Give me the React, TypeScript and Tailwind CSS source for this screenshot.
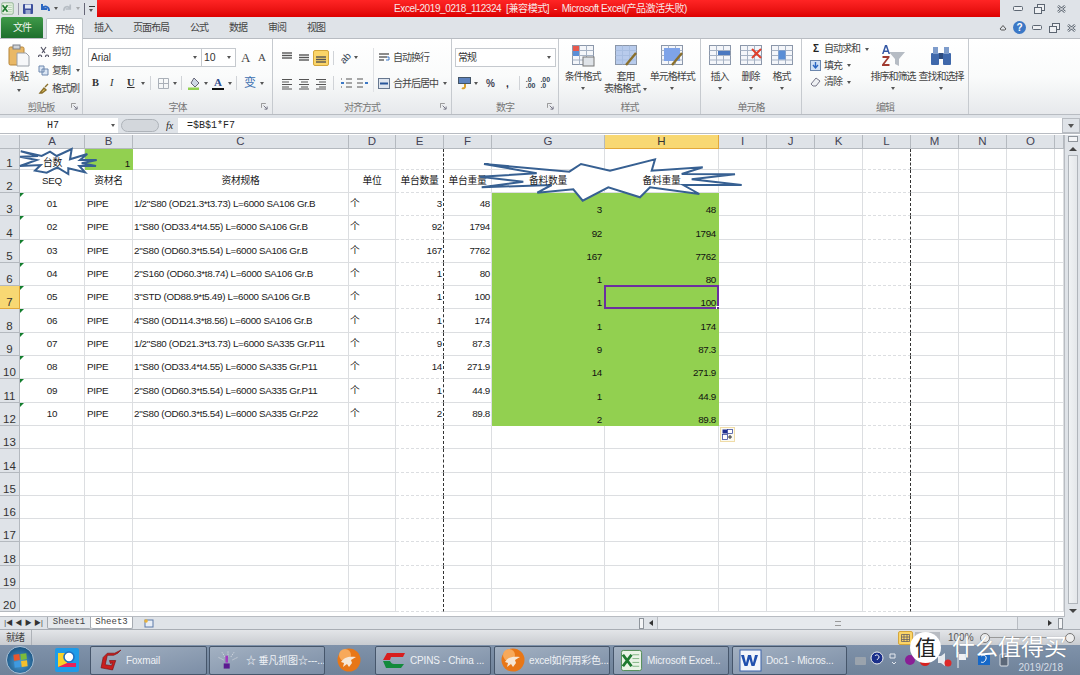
import type { ReactNode } from 'react';

const colWidths = [65, 48, 216, 47, 48, 48, 113, 114, 48, 48, 48, 48, 48, 48, 48, 9];
const colNames = ['A', 'B', 'C', 'D', 'E', 'F', 'G', 'H', 'I', 'J', 'K', 'L', 'M', 'N', 'O', ''];

const rows = [
    ['01', '1/2"S80 (OD21.3*t3.73) L=6000 SA106 Gr.B', '3', '48'],
    ['02', '1"S80 (OD33.4*t4.55) L=6000 SA106 Gr.B', '92', '1794'],
    ['03', '2"S80 (OD60.3*t5.54) L=6000 SA106 Gr.B', '167', '7762'],
    ['04', '2"S160 (OD60.3*t8.74) L=6000 SA106 Gr.B', '1', '80'],
    ['05', '3"STD (OD88.9*t5.49) L=6000 SA106 Gr.B', '1', '100'],
    ['06', '4"S80 (OD114.3*t8.56) L=6000 SA106 Gr.B', '1', '174'],
    ['07', '1/2"S80 (OD21.3*t3.73) L=6000 SA335 Gr.P11', '9', '87.3'],
    ['08', '1"S80 (OD33.4*t4.55) L=6000 SA335 Gr.P11', '14', '271.9'],
    ['09', '2"S80 (OD60.3*t5.54) L=6000 SA335 Gr.P11', '1', '44.9'],
    ['10', '2"S80 (OD60.3*t5.54) L=6000 SA335 Gr.P22', '2', '89.8'],
];

const tabs = ['插入', '页面布局', '公式', '数据', '审阅', '视图'];

function Caret({ className = '' }: { className?: string }) {
    return <span className={`inline-block shrink-0 w-0 h-0 border-x-[2.5px] border-x-transparent border-t-[3px] border-t-[#555] ${className}`} />;
}

function RowHeader({ n, h, active }: { n: number; h: string; active?: boolean }) {
    return (
        <div className={`${h} flex items-end justify-center text-[11.5px] leading-[11px] border-b border-r ${active ? 'bg-[#f8d873] border-[#e2a83a] text-[#333]' : 'bg-[#dfe3e8] border-[#b4b9bf] text-[#333]'}`}>
            {n}
        </div>
    );
}

function Cell({ col, children, className = '', green }: { col: number; children?: ReactNode; className?: string; green?: boolean }) {
    const dashed = col === 4 || col === 11;
    const tone = green ? 'bg-[#92d050] border-[#92d050] leading-[10px] text-[#111]' : 'border-[#dcdee1] leading-[12px] text-[#1a1a1a]';
    return (
        <div
            className={`relative flex min-w-0 whitespace-nowrap border-b text-[9.8px] tracking-[-0.3px] ${tone} ${dashed ? 'border-r border-r-[#333] border-dashed' : 'border-r'} ${className}`}
        >
            {children}
        </div>
    );
}

function SheetRow({ n, h, cells, active }: { n: number; h: string; cells?: Record<number, ReactNode>; active?: boolean }) {
    return (
        <>
            <RowHeader n={n} h={h} active={active} />
            {colWidths.map((_, i) => (
                <div key={i} className="contents">
                    {cells?.[i] ?? <Cell col={i} />}
                </div>
            ))}
        </>
    );
}

function Group({ label, className, children, launcher }: { label: string; className: string; children?: ReactNode; launcher?: boolean }) {
    return (
        <div className={`relative flex flex-col border-r border-[#c6cacf] ${className}`}>
            <div className="flex-1 min-h-0">{children}</div>
            <div className="h-[14px] flex items-center justify-center text-[10px] text-[#777]">{label}</div>
            {launcher && (
                <svg className="absolute right-[4px] bottom-[4px]" width="7" height="7" viewBox="0 0 8 8">
                    <path d="M.5.5h5M.5.5v5" stroke="#888" fill="none" />
                    <path d="M3 3l3.5 3.5M4 7h3V4" stroke="#667" fill="none" />
                </svg>
            )}
        </div>
    );
}

function LargeButton({ label, second, icon, className = '' }: { label: string; second?: string; icon: ReactNode; className?: string }) {
    return (
        <div className={`flex flex-col items-center text-[10px] leading-[12px] text-[#444] ${className}`}>
            <div className="h-[24px] mt-[5px] mb-[3px] flex items-center">{icon}</div>
            <span className="whitespace-nowrap">{label}</span>
            {second ? (
                <span className="whitespace-nowrap flex items-center gap-[3px]">
                    {second}
                    <Caret />
                </span>
            ) : (
                <Caret className="mt-[4px]" />
            )}
        </div>
    );
}

function Sep({ className = '' }: { className?: string }) {
    return <span className={`shrink-0 w-px h-[14px] bg-[#d0d3d7] ${className}`} />;
}

function AlignIcon({ kind, className = '' }: { kind: 'l' | 'c' | 'r' | 't' | 'm' | 'b'; className?: string }) {
    if (kind === 't' || kind === 'm' || kind === 'b') {
        const ys = kind === 't' ? [2, 4.5, 7] : kind === 'm' ? [4, 6.5, 9] : [6, 8.5, 11];
        return (
            <svg className={`shrink-0 ${className}`} width="12" height="13" viewBox="0 0 12 13">
                {ys.map((y) => (
                    <path key={y} d={`M1 ${y}h10`} stroke="#555" strokeWidth="1.4" />
                ))}
            </svg>
        );
    }
    const short = kind === 'l' ? 'M1 5h7M1 10h7' : kind === 'c' ? 'M3 5h7M3 10h7' : 'M4 5h7M4 10h7';
    return (
        <svg className={`shrink-0 ${className}`} width="12" height="13" viewBox="0 0 12 13">
            <path d="M1 2.5h10M1 7.5h10M1 12h10" stroke="#555" strokeWidth="1.2" />
            <path d={short} stroke="#555" strokeWidth="1.2" />
        </svg>
    );
}

function GridIcon({ children }: { children?: ReactNode }) {
    return (
        <svg width="24" height="24" viewBox="0 0 24 24">
            <rect x="1.5" y="1.5" width="21" height="19" fill="#f4f6fa" stroke="#8b97aa" />
            <path d="M1.5 6.5h21M1.5 11.5h21M1.5 16h21M8.5 1.5v19M15.5 1.5v19" stroke="#a6b2c4" fill="none" />
            {children}
        </svg>
    );
}

function TaskButton({ label, icon, className }: { label: string; icon: ReactNode; className: string }) {
    return (
        <div className={`h-[29px] flex items-center gap-[4px] pl-[6px] rounded-[2px] border border-[#46566b] bg-linear-to-br from-[#a3b1c2] to-[#7c8ea6] text-[10px] tracking-[-0.15px] text-[#eef1f5] whitespace-nowrap overflow-hidden ${className}`}>
            <span className="shrink-0 flex">{icon}</span>
            <span>{label}</span>
        </div>
    );
}

function WindowButtons() {
    return (
        <>
            <svg width="11" height="6" viewBox="0 0 11 6">
                <rect x=".5" y=".5" width="9" height="4" rx="1" fill="#eef0f3" stroke="#5d6672" />
            </svg>
            <svg width="11" height="10" viewBox="0 0 11 10">
                <rect x="3.5" y=".5" width="7" height="6" fill="#eef0f3" stroke="#5d6672" />
                <rect x=".5" y="3.5" width="7" height="6" fill="#eef0f3" stroke="#5d6672" />
            </svg>
            <svg width="11" height="10" viewBox="0 0 11 10">
                <path d="M2 2l7 6M9 2l-7 6" stroke="#5d6672" strokeWidth="2.4" />
                <path d="M2 2l7 6M9 2l-7 6" stroke="#eef0f3" strokeWidth="1" />
            </svg>
        </>
    );
}

function ExcelIcon({ size, className = '' }: { size: number; className?: string }) {
    return (
        <svg className={`shrink-0 ${className}`} width={size} height={size} viewBox="0 0 24 24">
            <rect x="1.5" y="1.5" width="21" height="21" rx="2" fill="#eaf3e6" stroke="#4d8a50" />
            <path d="M13 6h7M13 10h7M13 14h7M13 18h7" stroke="#7fb482" />
            <path d="M3 6l9 12M12 6l-9 12" stroke="#1f7a30" strokeWidth="3" />
        </svg>
    );
}

function FirebirdIcon() {
    return (
        <svg width="24" height="24" viewBox="0 0 24 24">
            <circle cx="12" cy="12" r="11.5" fill="#e87717" />
            <circle cx="8" cy="7" r="6" fill="#f7a95a" />
            <path d="M4 14c3-5 8-6 15-5l-5 3 1 3-3 4-2-3-4 3 1-4z" fill="#f6e7d6" />
        </svg>
    );
}

function App() {
    const greenCorner = <span className="absolute left-0 top-0 w-0 h-0 border-r-[4px] border-r-transparent border-t-[4px] border-t-[#127d2c]" />;

    return (
        <div className="w-[1080px] h-[675px] overflow-hidden flex flex-col relative bg-white [font-family:'Liberation_Sans','Noto_Sans_CJK_SC',sans-serif]">
            {/* title bar */}
            <div className="h-[17px] flex bg-[#dfe3e8]">
                <div className="w-[97px] shrink-0 flex items-center pl-px">
                    <ExcelIcon size={13} />
                    <span className="ml-[4px] w-px h-[12px] bg-[#99a]" />
                    <svg className="ml-[3px] shrink-0" width="12" height="12" viewBox="0 0 12 12">
                        <rect x="1" y="1" width="10" height="10" rx="1" fill="#3d4f9c" />
                        <rect x="3" y="1.5" width="6" height="4" fill="#dfe6f3" />
                        <rect x="3.5" y="7" width="5" height="4" fill="#9aa8cf" />
                    </svg>
                    <svg className="ml-[5px] shrink-0" width="12" height="11" viewBox="0 0 12 11" fill="none">
                        <path d="M3 1v5h5" stroke="#2a66c2" strokeWidth="2" />
                        <path d="M3 6c2-4 7-3 7 2" stroke="#2a66c2" strokeWidth="2" />
                    </svg>
                    <Caret className="ml-[3px]" />
                    <svg className="ml-[4px] shrink-0" width="11" height="11" viewBox="0 0 12 11" fill="none">
                        <path d="M9 1v5H4M9 6C7 2 2 3 2 8" stroke="#b7bdc4" strokeWidth="1.8" />
                    </svg>
                    <Caret className="ml-[3px] opacity-40" />
                    <span className="ml-[4px] w-px h-[12px] bg-[#667]" />
                    <span className="ml-[4px] w-[6px] h-[6px] border-t border-[#333] flex items-end">
                        <Caret />
                    </span>
                </div>
                <div className="w-[903px] shrink-0 flex items-center justify-center bg-linear-to-b from-[#ff2424] to-[#dd0000] text-[10px] tracking-[-0.4px] text-[#f8e8e8] whitespace-pre pr-[16px]">
                    Excel-2019_0218_112324{'  '}[兼容模式]{'  '}-{'  '}Microsoft Excel(产品激活失败)
                </div>
                <div className="flex-1 flex items-center justify-around px-[8px] pt-px">
                    <WindowButtons />
                </div>
            </div>

            {/* ribbon tabs */}
            <div className="h-[21px] flex items-end bg-[#dfe3e8] text-[10px] tracking-[-1px] text-[#444] relative">
                <div className="w-[42px] ml-px h-[21px] flex items-center justify-center rounded-t-[2px] bg-linear-to-b from-[#3f9a49] to-[#1d6f2d] text-[#eef5ee]">文件</div>
                <div className="w-[37px] ml-[3px] h-[21px] -mb-px flex items-center justify-center rounded-t-[2px] bg-white border-x border-t border-[#c1c6cc] z-10">开始</div>
                <div className="flex h-[21px] items-center gap-[21px] ml-[11px]">
                    {tabs.map((t) => (
                        <span key={t}>{t}</span>
                    ))}
                </div>
                <div className="ml-auto flex items-center gap-[6px] h-[21px] pr-[3px] tracking-normal">
                    <svg width="8" height="7" viewBox="0 0 8 7" fill="none">
                        <path d="M1 5l3-3.5L7 5l-1.5 1h-3z" stroke="#555" />
                    </svg>
                    <span className="w-[13px] h-[13px] rounded-full bg-[#3c78c6] text-white text-[10px] font-bold flex items-center justify-center">?</span>
                    <WindowButtons />
                </div>
            </div>

            {/* ribbon */}
            <div className="h-[77px] flex border-y border-[#b8bcc2] bg-linear-to-b from-white via-[#fafbfb] to-[#e7e9ec] tracking-[-1px] whitespace-nowrap">
                <Group label="剪贴板" launcher className="w-[83px]">
                    <div className="flex h-full">
                        <div className="w-[38px] flex flex-col items-center text-[10px] text-[#444]">
                            <svg className="mt-[5px]" width="22" height="23" viewBox="0 0 22 23">
                                <rect x="1" y="3" width="15" height="18" rx="1.5" fill="#e9b866" stroke="#b5853a" />
                                <rect x="5" y="1" width="7" height="4" fill="#cfd3d8" stroke="#7c8087" />
                                <path d="M9 9h9l3 3v10H9z" fill="#f6f7f9" stroke="#9aa0a8" />
                            </svg>
                            <span className="mt-[4px] leading-[12px]">粘贴</span>
                            <Caret className="mt-[6px]" />
                        </div>
                        <div className="flex flex-col gap-[5px] pt-[6px] text-[10px] leading-[13.5px] text-[#444]">
                            {['剪切', '复制', '格式刷'].map((t, i) => (
                                <div key={t} className="flex items-center gap-[3px]">
                                    <svg width="11" height="11" viewBox="0 0 11 11" fill="none">
                                        {i === 0 && <path d="M3 1l4 6M8 1L4 7M2 9a1.5 1.5 0 1 0 .1 0M9 9a1.5 1.5 0 1 0 .1 0" stroke="#556" strokeWidth="1.2" />}
                                        {i === 1 && <path d="M1 1h5v6H1zM4 4h6v6H4z" fill="#dbe6f4" stroke="#6c87ad" />}
                                        {i === 2 && <path d="M2 10l4-5 2 2-4 3zM7 4l3-3" fill="#e8c860" stroke="#8a6f2b" strokeWidth="1.4" />}
                                    </svg>
                                    <span>{t}</span>
                                    {i === 1 && <Caret className="ml-[3px]" />}
                                </div>
                            ))}
                        </div>
                    </div>
                </Group>

                <Group label="字体" launcher className="w-[190px]">
                    <div className="pt-[9px] pl-[5px]">
                        <div className="flex items-center tracking-normal">
                            <div className="w-[114px] h-[19px] flex items-center justify-between px-[2px] pr-[4px] border border-[#c5c9ce] bg-white text-[10px] text-[#333]">
                                Arial
                                <Caret />
                            </div>
                            <div className="w-[35px] h-[19px] -ml-px flex items-center justify-between px-[2px] pr-[4px] border border-[#c5c9ce] bg-white text-[10.5px] text-[#333]">
                                10
                                <Caret />
                            </div>
                            <span className="ml-[5px] w-[15px] text-[13px] leading-none text-[#444] [font-family:'Liberation_Serif',serif]">A</span>
                            <span className="ml-[2px] w-[12px] text-[11px] leading-none text-[#444] [font-family:'Liberation_Serif',serif]">A</span>
                        </div>
                        <div className="flex items-center mt-[7px] h-[18px] text-[#333] tracking-normal">
                            <span className="ml-[4px] w-[8px] text-[10.5px] font-bold [font-family:'Liberation_Serif',serif]">B</span>
                            <span className="ml-[10px] w-[8px] text-[10.5px] italic [font-family:'Liberation_Serif',serif]">I</span>
                            <span className="ml-[9px] w-[8px] text-[10.5px] underline font-bold [font-family:'Liberation_Serif',serif]">U</span>
                            <Caret className="ml-[6px]" />
                            <Sep className="ml-[5px]" />
                            <svg className="ml-[7px]" width="11" height="11" viewBox="0 0 11 11" fill="none">
                                <path d="M.5.5h10v10H.5zM5.5.5v10M.5 5.5h10" stroke="#aab0b8" />
                            </svg>
                            <Caret className="ml-[4px]" />
                            <Sep className="ml-[4px]" />
                            <svg className="ml-[6px]" width="13" height="13" viewBox="0 0 13 13">
                                <path d="M6 1l5 5-4 4-4-4z" fill="#cfd8e6" stroke="#667" />
                                <rect x="0" y="10.500" width="11" height="2.500" fill="#92d050" />
                            </svg>
                            <Caret className="ml-[3px]" />
                            <span className="ml-[4px] w-[12px] h-[13px] text-center text-[11px] leading-[11px] font-bold text-[#2c4c8c] [font-family:'Liberation_Serif',serif] border-b-[2.5px] border-[#111]">A</span>
                            <Caret className="ml-[4px]" />
                            <Sep className="ml-[4px]" />
                            <span className="ml-[7px] w-[12px] text-[12px] leading-none text-[#3c6fb0]">变</span>
                            <Caret className="ml-[4px]" />
                        </div>
                    </div>
                </Group>

                <Group label="对齐方式" launcher className="w-[179px]">
                    <div className="flex pt-[9px] pl-[8px]">
                        <div className="w-[92px]">
                            <div className="flex items-center h-[19px]">
                                <AlignIcon kind="t" />
                                <AlignIcon kind="m" className="ml-[5px]" />
                                <span className="shrink-0 w-[16px] h-[16px] ml-[3px] flex items-center justify-center rounded-[2px] bg-[#fbd568] border border-[#d4a63c]">
                                    <AlignIcon kind="b" />
                                </span>
                                <Sep className="ml-[4px]" />
                                <span className="ml-[6px] w-[12px] text-[10px] tracking-normal leading-none text-[#345] -rotate-45">ab</span>
                                <Caret className="ml-[2px]" />
                            </div>
                            <div className="flex items-center h-[18px] mt-[7px]">
                                <AlignIcon kind="l" />
                                <AlignIcon kind="c" className="ml-[5px]" />
                                <AlignIcon kind="r" className="ml-[5px]" />
                                <Sep className="ml-[6px]" />
                                <svg className="ml-[6px] shrink-0" width="12" height="12" viewBox="0 0 12 12" fill="none">
                                    <path d="M1 2h1M6 2h6M6 6h6M6 10h6M1 10h1" stroke="#555" />
                                    <path d="M1 6h3" stroke="#3c78c6" strokeWidth="2" />
                                </svg>
                                <svg className="ml-[4px] shrink-0" width="12" height="12" viewBox="0 0 12 12" fill="none">
                                    <path d="M1 2h6M1 6h6M1 10h6" stroke="#555" />
                                    <path d="M9 6h3" stroke="#3c78c6" strokeWidth="2" />
                                </svg>
                            </div>
                        </div>
                        <div className="text-[10px] text-[#444] border-l border-[#dfe1e4] pl-[4px]">
                            <div className="flex items-center h-[19px] gap-[3px]">
                                <svg width="12" height="11" viewBox="0 0 12 11" fill="none">
                                    <path d="M1 2h10M1 5h8M1 8h5" stroke="#666" strokeWidth="1.4" />
                                    <path d="M9 5h2v3H8" stroke="#3c78c6" />
                                </svg>
                                自动换行
                            </div>
                            <div className="flex items-center h-[18px] gap-[3px] mt-[7px]">
                                <svg width="12" height="11" viewBox="0 0 12 11">
                                    <rect x=".5" y=".5" width="11" height="10" fill="#dfe6f0" stroke="#66778f" />
                                    <path d="M2 5.500h8" stroke="#28569a" strokeWidth="2" />
                                </svg>
                                合并后居中
                                <Caret className="ml-[2px]" />
                            </div>
                        </div>
                    </div>
                </Group>

                <Group label="数字" launcher className="w-[107px]">
                    <div className="pt-[9px] pl-[3px]">
                        <div className="w-[101px] h-[19px] flex items-center justify-between px-[2px] pr-[4px] border border-[#c5c9ce] bg-white text-[10px] text-[#333]">
                            常规
                            <Caret />
                        </div>
                        <div className="flex items-center h-[18px] mt-[7px] pl-[3px] text-[10px] text-[#444] tracking-normal">
                            <svg width="13" height="13" viewBox="0 0 13 13">
                                <rect x=".5" y=".5" width="12" height="6" fill="#5c82bd" stroke="#456" />
                                <path d="M7 7v3a2 2 0 0 1-3 1" fill="none" stroke="#d8a02c" strokeWidth="2" />
                            </svg>
                            <Caret className="ml-[3px]" />
                            <span className="ml-[8px] font-bold text-[#445]">%</span>
                            <span className="ml-[11px] font-bold text-[#223]">,</span>
                            <Sep className="ml-[10px]" />
                            <span className="ml-[6px] text-[7px] leading-[6px] font-bold text-[#345]">
                                .0
                                <br />
                                .00
                            </span>
                            <span className="ml-[5px] text-[7px] leading-[6px] font-bold text-[#345]">
                                .00
                                <br />
                                .0
                            </span>
                        </div>
                    </div>
                </Group>

                <Group label="样式" className="w-[142px]">
                    <div className="flex">
                        <LargeButton
                            className="w-[48px]"
                            label="条件格式"
                            icon={
                                <GridIcon>
                                    <rect x="2" y="2" width="6" height="5" fill="#e8584c" />
                                    <rect x="2" y="7" width="6" height="5" fill="#5a8ed6" />
                                    <rect x="12" y="13" width="11" height="9" fill="#dfe3e8" stroke="#777" />
                                </GridIcon>
                            }
                        />
                        <LargeButton
                            className="w-[38px]"
                            label="套用"
                            second="表格格式"
                            icon={
                                <GridIcon>
                                    <rect x="2" y="2" width="20" height="18" fill="#a9c0e8" opacity=".8" />
                                    <path d="M12 21l10-12" stroke="#8a6f2b" strokeWidth="2.4" />
                                </GridIcon>
                            }
                        />
                        <LargeButton
                            className="w-[56px]"
                            label="单元格样式"
                            icon={
                                <GridIcon>
                                    <rect x="4" y="4" width="16" height="13" fill="#7ea3e8" />
                                    <path d="M12 21l10-12" stroke="#8a6f2b" strokeWidth="2.4" />
                                </GridIcon>
                            }
                        />
                    </div>
                </Group>

                <Group label="单元格" className="w-[101px]">
                    <div className="flex pl-[3px]">
                        <LargeButton
                            className="w-[31px]"
                            label="插入"
                            icon={
                                <GridIcon>
                                    <path d="M10 9h12" stroke="#4a78c0" strokeWidth="4" />
                                </GridIcon>
                            }
                        />
                        <LargeButton
                            className="w-[31px]"
                            label="删除"
                            icon={
                                <GridIcon>
                                    <path d="M13 5l9 9M22 5l-9 9" stroke="#e0402c" strokeWidth="2" />
                                </GridIcon>
                            }
                        />
                        <LargeButton
                            className="w-[31px]"
                            label="格式"
                            icon={
                                <GridIcon>
                                    <rect x="8.500" y="6.500" width="7" height="9" fill="#5a8ed6" />
                                </GridIcon>
                            }
                        />
                    </div>
                </Group>

                <Group label="编辑" className="w-[167px]">
                    <div className="flex">
                        <div className="w-[68px] pl-[8px] pt-[2px] text-[10px] leading-[16.5px] text-[#444]">
                            <div className="flex items-center gap-[3px]">
                                <span className="w-[11px] text-center font-bold text-[#222]">Σ</span>自动求和
                                <Caret className="ml-[2px]" />
                            </div>
                            <div className="flex items-center gap-[3px]">
                                <svg width="11" height="11" viewBox="0 0 11 11">
                                    <rect x=".5" y=".5" width="10" height="10" fill="#cfe0f5" stroke="#6c87ad" />
                                    <path d="M5.500 2v5M3 5l2.500 3L8 5" fill="none" stroke="#2a66c2" strokeWidth="1.4" />
                                </svg>
                                填充
                                <Caret className="ml-[2px]" />
                            </div>
                            <div className="flex items-center gap-[3px]">
                                <svg width="11" height="10" viewBox="0 0 11 10">
                                    <path d="M1 7l5-6 4 3-4 5H3z" fill="#eef0f3" stroke="#778" />
                                </svg>
                                清除
                                <Caret className="ml-[2px]" />
                            </div>
                        </div>
                        <LargeButton
                            className="w-[46px]"
                            label="排序和筛选"
                            icon={
                                <svg width="24" height="24" viewBox="0 0 24 24">
                                    <path d="M8 8h16l-6 7v7l-4-2v-5z" fill="#b6bcc4" />
                                    <path d="M4 1L1 10h1.500l.7-2h3.600l.7 2H9L6 1zM3.700 6.500L5 3l1.300 3.500z" fill="#3558a5" />
                                    <path d="M1.500 12h7v1.500L3.500 20h5v2h-7.500v-1.500l5-6.500h-4.500z" fill="#a03a30" />
                                </svg>
                            }
                        />
                        <LargeButton
                            className="w-[46px] ml-[2px]"
                            label="查找和选择"
                            icon={
                                <svg width="22" height="22" viewBox="0 0 22 22">
                                    <rect x="1" y="8" width="8" height="12" rx="1" fill="#3f68ab" />
                                    <rect x="13" y="8" width="8" height="12" rx="1" fill="#3f68ab" />
                                    <rect x="3" y="2" width="5" height="7" fill="#7e9ccb" />
                                    <rect x="14" y="2" width="5" height="7" fill="#7e9ccb" />
                                    <rect x="9" y="8" width="4" height="6" fill="#2e4c7f" />
                                </svg>
                            }
                        />
                    </div>
                </Group>
            </div>

            {/* formula bar */}
            <div className="h-[19px] pt-[3px] flex items-stretch bg-[#dfe3e8] border-b border-[#b8bcc2] [font-family:'Liberation_Mono',monospace] text-[10px] text-[#222]">
                <div className="w-[118px] flex items-center justify-between bg-white pl-[47px] pr-[3px]">
                    H7
                    <Caret />
                </div>
                <div className="w-[60px] flex items-center">
                    <span className="ml-[3px] w-[38px] h-[13px] rounded-full border border-[#aeb3b9] bg-[#d3d7dc]" />
                    <span className="ml-[7px] text-[10px] italic [font-family:'Liberation_Serif',serif]">fx</span>
                </div>
                <div className="flex-1 flex items-center bg-white pl-[9px]">=$B$1*F7</div>
                <div className="w-[18px] flex items-center justify-center border border-[#b8bcc2]">
                    <Caret className="border-t-[4px] border-x-[3px]" />
                </div>
            </div>

            {/* sheet */}
            <div className="flex h-[482px] relative mt-px">
                <div className="grid w-[1064px] shrink-0 h-fit grid-cols-[20px_65px_48px_216px_47px_48px_48px_113px_114px_48px_48px_48px_48px_48px_48px_48px_9px]">
                    <div className="h-[14px] bg-[#dfe3e8] border-r border-b border-[#b4b9bf]" />
                    {colNames.map((c, i) => (
                        <div
                            key={i}
                            className={`h-[14px] flex items-center justify-center text-[11.5px] border-r border-b ${c === 'H' ? 'bg-[#f8d873] border-[#e2a83a] text-[#333]' : 'bg-[#dfe3e8] border-[#b4b9bf] text-[#445]'}`}
                        >
                            {c}
                        </div>
                    ))}

                    <SheetRow
                        n={1}
                        h="h-[21px]"
                        cells={{
                            0: (
                                <Cell col={0} className="items-end justify-center">
                                    <span className="relative z-10 ml-[1px]">台数</span>
                                </Cell>
                            ),
                            1: (
                                <Cell col={1} green className="items-end justify-end pr-[2px]">
                                    1
                                </Cell>
                            ),
                        }}
                    />
                    <SheetRow
                        n={2}
                        h="h-[23px]"
                        cells={{
                            0: <Cell col={0} className="items-center justify-center">SEQ</Cell>,
                            1: <Cell col={1} className="items-center justify-center">资材名</Cell>,
                            2: <Cell col={2} className="items-center justify-center">资材规格</Cell>,
                            3: <Cell col={3} className="items-center justify-center">单位</Cell>,
                            4: <Cell col={4} className="items-center justify-center">单台数量</Cell>,
                            5: <Cell col={5} className="items-center justify-center">单台重量</Cell>,
                            6: (
                                <Cell col={6} className="items-center justify-center">
                                    <span className="relative z-10">备料数量</span>
                                </Cell>
                            ),
                            7: (
                                <Cell col={7} className="items-center justify-center">
                                    <span className="relative z-10">备料重量</span>
                                </Cell>
                            ),
                        }}
                    />
                    {rows.map((r, i) => {
                        const n = i + 3;
                        const selected = n === 7;
                        return (
                            <SheetRow
                                key={n}
                                n={n}
                                h="h-[23.3px]"
                                active={selected}
                                cells={{
                                    0: (
                                        <Cell col={0} className="items-center justify-center">
                                            {greenCorner}
                                            {r[0]}
                                        </Cell>
                                    ),
                                    1: <Cell col={1} className="items-center pl-[2px]">PIPE</Cell>,
                                    2: <Cell col={2} className="items-center pl-[1px]">{r[1]}</Cell>,
                                    3: <Cell col={3} className="items-center pl-[1px]">个</Cell>,
                                    4: <Cell col={4} className="items-center justify-end pr-[1px]">{r[2]}</Cell>,
                                    5: <Cell col={5} className="items-center justify-end pr-[1px]">{r[3]}</Cell>,
                                    6: (
                                        <Cell col={6} green className="items-end justify-end pr-[2px]">
                                            {r[2]}
                                        </Cell>
                                    ),
                                    7: (
                                        <Cell col={7} green className="items-end justify-end pr-[2px]">
                                            {r[3]}
                                            {selected && (
                                                <span className="absolute -left-px -top-px w-[115px] h-[24.3px] border-2 border-[#6b2fa0]">
                                                    <span className="absolute -right-[3px] -bottom-[3px] w-[4px] h-[4px] bg-[#5a2a90] border border-white" />
                                                </span>
                                            )}
                                        </Cell>
                                    ),
                                }}
                            />
                        );
                    })}
                    {Array.from({ length: 8 }, (_, i) => (
                        <SheetRow
                            key={i}
                            n={i + 13}
                            h="h-[23.3px]"
                            cells={
                                i === 0
                                    ? {
                                          8: (
                                              <Cell col={8}>
                                                  <span className="absolute left-[1px] top-[1px] w-[15px] h-[15px] flex items-center justify-center border border-[#f0dca8] bg-[#fbfaf2]">
                                                      <svg width="11" height="11" viewBox="0 0 11 11">
                                                          <rect x=".5" y=".5" width="5" height="4" fill="#1f2f8f" />
                                                          <rect x="5.500" y=".5" width="5" height="4" fill="#fff" stroke="#1f2f8f" strokeWidth=".7" />
                                                          <rect x=".5" y="5.500" width="5" height="5" fill="#fff" stroke="#1f2f8f" strokeWidth=".7" />
                                                          <path d="M8 6v4M6 8h4" stroke="#333" />
                                                      </svg>
                                                  </span>
                                              </Cell>
                                          ),
                                      }
                                    : undefined
                            }
                        />
                    ))}
                </div>

                {/* shapes drawn on top of the sheet */}
                <svg className="absolute left-0 top-0 z-[5] pointer-events-none" width="1062" height="100" viewBox="0 135 1062 100">
                    <path
                        d="M20.700 151.300 L41.700 156 L50 151.700 L56.700 156 L71.700 149 L70 159.300 L87.300 154 L80 160 L96.700 160 L81.700 163.300 L96 166 L79.300 166 L85 172.300 L68.300 168.300 L68.300 174 L57.300 167.300 L46.700 172.700 L35 170.700 L40.700 165 L20 166 L36.700 160 L20 156.700 L38 156 Z"
                        fill="#fff"
                        stroke="#376092"
                        strokeWidth="2"
                    />
                    <path
                        d="M484 164 L569.300 171.700 L581 164 L610 170.700 L655 159.300 L651.700 170.700 L702.700 167.300 L681.700 174 L735 174.300 L691.700 179.300 L741.700 185 L683.300 185 L699.300 194 L650 187.300 L640 197.300 L608.300 187.300 L582.700 200.700 L573.300 189.300 L537.300 192.700 L551.700 185 L481.700 187.300 L523.300 181.700 L480 176.700 L536.700 173.300 Z"
                        fill="#fff"
                        stroke="#376092"
                        strokeWidth="2"
                    />
                </svg>

                {/* vertical scrollbar */}
                <div className="flex-1 flex flex-col bg-[#dfe3e8] border-l border-[#b8bcc2] items-center">
                    <div className="w-[10px] h-[6px] mt-px border border-[#8f959c] bg-[#f4f5f7]" />
                    <div className="h-[13px] flex items-center">
                        <span className="w-0 h-0 border-x-[4px] border-x-transparent border-b-[4px] border-b-[#444]" />
                    </div>
                    <div className="w-[10px] flex-1 border border-[#b0b5bb] bg-linear-to-r from-[#f0f2f4] to-[#e4e7ea]" />
                    <div className="h-[13px] flex items-center">
                        <span className="w-0 h-0 border-x-[4px] border-x-transparent border-t-[4px] border-t-[#444]" />
                    </div>
                </div>
            </div>

            {/* sheet tabs */}
            <div className="h-[13px] flex items-center bg-[#dfe3e8] border-t border-[#b8bcc2] -mt-px text-[9px] text-[#444]">
                <div className="w-[47px] flex items-center justify-around px-[3px] text-[7px] text-[#333]">
                    <span>|◀</span>
                    <span>◀</span>
                    <span>▶</span>
                    <span>▶|</span>
                </div>
                <div className="h-full flex items-center [font-family:'Liberation_Mono',monospace]">
                    <span className="w-[44px] h-full flex items-center justify-center border-x border-b border-[#a5aab1] bg-[#e6e9ed] rounded-b-[2px]">Sheet1</span>
                    <span className="w-[42px] h-full flex items-center justify-center border-r border-b border-[#a5aab1] bg-white rounded-b-[2px]">Sheet3</span>
                    <span className="w-[32px] h-full flex items-center justify-center">
                        <svg width="10" height="9" viewBox="0 0 10 9">
                            <rect x="1" y="1" width="8" height="7" fill="#e8eef7" stroke="#5c7aa8" />
                            <circle cx="2" cy="2" r="1.800" fill="#e8b23c" />
                        </svg>
                    </span>
                </div>
                <div className="w-[5px] h-[11px] ml-[474px] border border-[#8f959c] bg-[#f4f5f7]" />
                <div className="w-[13px] flex justify-center">
                    <span className="w-0 h-0 border-y-[3px] border-y-transparent border-r-[4px] border-r-[#333]" />
                </div>
                <div className="w-[361px] h-full border-x border-[#b8bcc2] bg-[#e6e9ed] flex items-center justify-center">
                    <span className="w-[6px] h-[5px] border-y border-[#999]" />
                </div>
                <div className="w-[39px] flex justify-end pr-[5px]">
                    <span className="w-0 h-0 border-y-[3px] border-y-transparent border-l-[4px] border-l-[#333]" />
                </div>
                <div className="w-[5px] h-[11px] ml-px border border-[#8f959c] bg-[#f4f5f7]" />
            </div>

            {/* status bar */}
            <div className="h-[16px] flex items-center bg-linear-to-b from-[#e3e5e8] to-[#c9ccd1] border-t border-[#a8adb4] text-[10px] text-[#444]">
                <span className="w-[32px] pl-[6px] tracking-[-1px] border-r border-[#aeb2b8] h-full flex items-center">就绪</span>
                <div className="ml-[866px] flex items-center h-full">
                    <span className="w-[15px] h-[14px] flex items-center justify-center border border-[#d4a63c] bg-[#fbd568] rounded-[2px]">
                        <svg width="9" height="8" viewBox="0 0 9 8" fill="none">
                            <path d="M.5.5h8v7h-8zM.5 3h8M.5 5.500h8M3 .5v7M6 .5v7" stroke="#556" strokeWidth=".7" />
                        </svg>
                    </span>
                    <span className="w-[25px] h-[12px] ml-[2px] bg-[#b8bcc2]" />
                    <span className="ml-[8px] w-[30px] text-[#555]">100%</span>
                    <span className="ml-[2px] w-[10px] h-[10px] rounded-full border border-[#777] bg-[#eee]" />
                    <span className="w-[75px] h-px bg-[#999]" />
                    <span className="w-[10px] h-[10px] rounded-full border border-[#777] bg-[#eee]" />
                </div>
            </div>

            {/* taskbar */}
            <div className="flex-1 flex items-center bg-linear-to-b from-[#7f92aa] to-[#6f8299] pl-[6px]">
                <div className="w-[28px] h-[28px] shrink-0 rounded-full bg-[radial-gradient(circle_at_50%_60%,#4aa0d8,#0e3c66)] border border-[#a8c0d6] flex items-center justify-center">
                    <span className="grid grid-cols-2 gap-px -rotate-6">
                        <span className="w-[6px] h-[6px] bg-[#e8562c]" />
                        <span className="w-[6px] h-[6px] bg-[#7cbb3a]" />
                        <span className="w-[6px] h-[6px] bg-[#3f9ae0]" />
                        <span className="w-[6px] h-[6px] bg-[#f4c02c]" />
                    </span>
                </div>
                <svg className="ml-[21px] shrink-0" width="24" height="24" viewBox="0 0 24 24">
                    <rect width="24" height="24" rx="2" fill="#1e9be8" />
                    <path d="M3 5h9v14H3z" fill="#f8d22a" />
                    <path d="M3 19l9-4h9v4z" fill="#e8215a" />
                    <circle cx="14" cy="9" r="5" fill="#fff" stroke="#1e6fc0" strokeWidth="1.600" />
                </svg>
                <TaskButton
                    className="ml-[11px] w-[117px] shrink-0"
                    label="Foxmail"
                    icon={
                        <svg width="22" height="22" viewBox="0 0 21 21" className="ml-[3px]">
                            <path d="M20 1l-6 3H7L3 8l-2 10 11 2 3-9H9l1 3 2-1-1 3-6-1 2-9h6l4-2z" fill="#c81e1e" stroke="#7a0e0e" strokeWidth=".6" />
                        </svg>
                    }
                />
                <TaskButton
                    className="ml-[2px] w-[116px] shrink-0"
                    label="☆ 垂凡抓图☆---..."
                    icon={
                        <svg width="24" height="24" viewBox="0 0 28 24" className="mr-[2px]">
                            <path d="M14 2v6M7 3l4 6M21 3l-4 6M3 9l6 3M25 9l-6 3" stroke="#d8dce2" strokeWidth="1" strokeDasharray="1.500 1" />
                            <rect x="9" y="16" width="7" height="6" fill="#5a1a90" />
                            <rect x="11" y="7" width="3" height="8" fill="#a23ac0" />
                        </svg>
                    }
                />
                <div className="ml-[12px] w-[24px] shrink-0 flex">
                    <FirebirdIcon />
                </div>
                <TaskButton
                    className="ml-[14px] w-[116px] shrink-0"
                    label="CPINS - China ..."
                    icon={
                        <svg width="24" height="15" viewBox="0 0 24 15">
                            <path d="M5 0h18l-2 4H9L8 7H1z" fill="#d81e1e" />
                            <path d="M1 8h7c1 2 2 3 4 3h10l-3 4H4z" fill="#138a3c" />
                        </svg>
                    }
                />
                <TaskButton className="ml-[3px] w-[116px] shrink-0" label="excel如何用彩色..." icon={<FirebirdIcon />} />
                <TaskButton className="ml-[3px] w-[116px] shrink-0" label="Microsoft Excel..." icon={<ExcelIcon size={23} />} />
                <TaskButton
                    className="ml-[3px] w-[115px] shrink-0"
                    label="Doc1 - Micros..."
                    icon={
                        <svg width="23" height="23" viewBox="0 0 23 23">
                            <rect x="1" y="1" width="21" height="21" fill="#f2f5fb" stroke="#3c62a8" />
                            <path d="M2 6h3l2 8 2-8h3l2 8 2-8h3l-3.500 11h-3l-2-7-2 7h-3z" fill="#1f4fae" />
                        </svg>
                    }
                />
                <div className="flex-1 flex items-center justify-end pr-[17px] text-[10px] text-[#d6dde6]">
                    <span className="pt-[14px] whitespace-nowrap">2019/2/18</span>
                </div>
            </div>

            {/* tray icons under the watermark */}
            <svg className="absolute left-[850px] top-[648px]" width="165" height="24" viewBox="0 0 165 24">
                <rect x="5" y="9" width="11" height="8" rx="1" fill="#9aa3ad" />
                <circle cx="27" cy="10" r="6" fill="#1a2f8a" stroke="#eee" />
                <path d="M25 8c1-2 4-1 4 1s-2 2-2 3" fill="none" stroke="#fff" />
                <path d="M40 6h5v4h-5zM42 14l2 2 2-2" fill="none" stroke="#e4e8ee" />
                <circle cx="60" cy="12" r="5" fill="#8a1f96" />
                <path d="M70 14h10a5 4 0 0 1-10 0z" fill="#d8201e" />
                <path d="M91 8l4-3v13l-4-3h-3V8z" fill="#e6e9ee" />
                <circle cx="98" cy="15" r="3.500" fill="#dd2a2a" />
                <path d="M108 4v16" stroke="#eef0f3" />
                <rect x="109" y="6" width="7" height="6" fill="#eef0f3" />
                <rect x="128" y="5" width="12" height="12" fill="#1668c8" />
                <path d="M131 8c3-2 6 0 5 3s-3 4-5 3" fill="none" stroke="#fff" />
                <rect x="150" y="6" width="8" height="12" rx="1" fill="#5c6878" stroke="#dde2e8" />
            </svg>

            {/* site watermark */}
            <div className="absolute left-[910px] top-[632px] flex items-center gap-[11px] text-white">
                <span className="w-[31px] h-[31px] rounded-full bg-white flex items-center justify-center text-[21px] leading-none text-[#222]">值</span>
                <span className="text-[23px] leading-none whitespace-nowrap [text-shadow:0_0_1px_rgba(60,70,80,.5)]">什么值得买</span>
            </div>
        </div>
    );
}

export default App;
